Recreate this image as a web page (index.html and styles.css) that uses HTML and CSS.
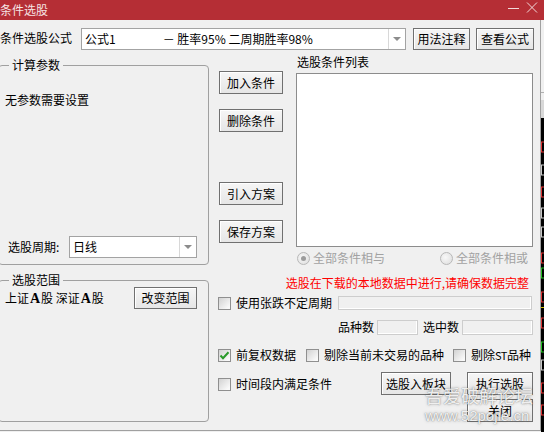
FILE: index.html
```html
<!DOCTYPE html>
<html lang="zh-CN">
<head>
<meta charset="utf-8">
<title>条件选股</title>
<link rel="stylesheet" href="styles.css">
</head>
<body>
<div class="titlebar">
  <span class="title">条件选股</span>
  <svg class="tb-ctrls" width="40" height="20" viewBox="0 0 40 20">
    <line x1="4" y1="8.5" x2="15" y2="8.5" stroke="#f2dada" stroke-width="1"/>
    <line x1="23" y1="2.5" x2="33" y2="12.5" stroke="#f2dada" stroke-width="1"/>
    <line x1="33" y1="2.5" x2="23" y2="12.5" stroke="#f2dada" stroke-width="1"/>
  </svg>
</div>
<div class="frame">
  <div class="dialog">
    <div class="formula-row">
      <span class="lbl-formula">条件选股公式</span>
      <div class="combo combo-formula">
        <span class="combo-text">公式1<span class="desc">－ 胜率95% 二周期胜率98%</span></span>
        <span class="combo-btn"><i class="tri"></i></span>
      </div>
      <button class="btn btn-note">用法注释</button>
      <button class="btn btn-view">查看公式</button>
    </div>
    <div class="main">
      <div class="left">
        <div class="group g-params">
          <span class="legend">计算参数</span>
          <div class="note">无参数需要设置</div>
          <div class="period-row">
            <span class="period-lbl">选股周期:</span>
            <div class="combo combo-period">
              <span class="combo-text">日线</span>
              <span class="combo-btn"><i class="tri"></i></span>
            </div>
          </div>
        </div>
        <div class="group g-range">
          <span class="legend">选股范围</span>
          <div class="range-row">
            <span class="range-text">上证<b class="fa">A</b>股 深证<b class="fa">A</b>股</span>
            <button class="btn btn-range">改变范围</button>
          </div>
        </div>
      </div>
      <div class="right">
        <div class="top">
          <div class="btn-col">
            <button class="btn btn-side">加入条件</button>
            <button class="btn btn-side gap-s">删除条件</button>
            <button class="btn btn-side gap-l">引入方案</button>
            <button class="btn btn-side gap-s">保存方案</button>
          </div>
          <div class="list-area">
            <div class="list-label">选股条件列表</div>
            <div class="listbox"></div>
          </div>
        </div>
        <div class="radio-row">
          <label class="radio-item r-and"><span class="radio on"></span>全部条件相与</label>
          <label class="radio-item"><span class="radio"></span>全部条件相或</label>
        </div>
        <div class="warn">选股在下载的本地数据中进行,请确保数据完整</div>
        <div class="row-period">
          <label class="chk-item"><span class="chk"></span>使用张跌不定周期</label>
          <span class="field field-period"></span>
        </div>
        <div class="row-counts">
          <span>品种数</span><span class="field field-count"></span>
          <span class="lbl-sel">选中数</span><span class="field field-sel"></span>
        </div>
        <div class="row-opts">
          <label class="chk-item"><span class="chk checked"><svg width="11" height="11" viewBox="0 0 11 11"><path d="M1.5 5.5 L4 8.2 L9.5 2.2" fill="none" stroke="#2a9a2a" stroke-width="2"/></svg></span>前复权数据</label>
          <label class="chk-item opt-gap"><span class="chk"></span>剔除当前未交易的品种</label>
          <label class="chk-item opt-gap2"><span class="chk"></span><span>剔除<span class="st">ST</span>品种</span></label>
        </div>
        <div class="row-actions">
          <label class="chk-item chk-time"><span class="chk"></span>时间段内满足条件</label>
          <div class="action-grid">
            <button class="btn btn-block">选股入板块</button>
            <button class="btn btn-run">执行选股</button>
            <button class="btn btn-close">关闭</button>
          </div>
        </div>
      </div>
    </div>
  </div>
  <div class="bgstrip">
    <svg width="3" height="412" viewBox="0 0 3 412">
      <rect x="0" y="0" width="3" height="78" fill="#f0f0f0"/>
      <rect x="0" y="72" width="3" height="1" fill="#b0b0b0"/>
      <rect x="0" y="80" width="3" height="18" fill="#d8d8d8"/>
      <rect x="0" y="98" width="3" height="314" fill="#000"/>
      <rect x="0.5" y="122" width="3" height="10" fill="none" stroke="#e03030"/>
      <rect x="0.5" y="145" width="3" height="10" fill="none" stroke="#c8c8c8"/>
      <rect x="0.5" y="167" width="3" height="10" fill="none" stroke="#e03030"/>
      <rect x="0.5" y="188" width="3" height="10" fill="none" stroke="#c8c8c8"/>
      <rect x="0.5" y="207" width="3" height="10" fill="none" stroke="#c8c8c8"/>
      <rect x="0.5" y="233" width="3" height="10" fill="none" stroke="#e03030"/>
      <rect x="0.5" y="248" width="3" height="10" fill="none" stroke="#20c020"/>
      <rect x="0.5" y="272" width="3" height="10" fill="none" stroke="#e03030"/>
      <rect x="0" y="287" width="3" height="1" fill="#d0c000"/>
      <rect x="0.5" y="298" width="3" height="10" fill="none" stroke="#e03030"/>
      <rect x="0.5" y="322" width="3" height="10" fill="none" stroke="#20c020"/>
      <rect x="0.5" y="340" width="3" height="10" fill="none" stroke="#c8c8c8"/>
      <rect x="0.5" y="363" width="3" height="10" fill="none" stroke="#e03030"/>
      <rect x="0.5" y="385" width="3" height="10" fill="none" stroke="#e03030"/>
    </svg>
  </div>
</div>
<div class="watermark">
  <div class="wm-cn">吾爱破解论坛</div>
  <div class="wm-url">www.52pojie.cn</div>
</div>
</body>
</html>
```

FILE: styles.css
```css
* { box-sizing: border-box; }
html, body { margin: 0; padding: 0; }
body {
  width: 544px;
  height: 432px;
  overflow: hidden;
  background: #f0f0f0;
  font-family: "Noto Sans CJK SC", "Noto Sans", sans-serif;
  font-size: 12px;
  line-height: 16px;
  color: #000;
  position: relative;
}
label { display: flex; align-items: center; }

/* title bar */
.titlebar {
  height: 20px;
  background: #b52e35;
  display: flex;
  align-items: center;
  justify-content: space-between;
}
.title { color: #f6e4e4; line-height: 20px; padding-left: 0; }
.tb-ctrls { display: block; }

/* frame */
.frame { display: flex; height: 412px; }
.dialog {
  width: 541px;
  height: 411px;
  border-right: 1px solid #a0a0a0;
  border-bottom: 1px solid #a0a0a0;
  display: flex;
  flex-direction: column;
}
.bgstrip { width: 3px; }
.bgstrip svg { display: block; }

/* buttons */
.btn {
  font: inherit;
  color: #000;
  margin: 0;
  padding: 0;
  height: 23px;
  line-height: 20px;
  border: 1px solid #707070;
  background: linear-gradient(#f6f6f6, #e6e6e6);
  box-shadow: inset 1px 1px 0 #fff;
  text-align: center;
}

/* combo */
.combo {
  display: flex;
  height: 22px;
  background: #fff;
  border: 1px solid #a3a3a3;
}
.combo-text { flex: 1; padding-left: 3px; line-height: 20px; white-space: nowrap; overflow: hidden; }
.combo-btn {
  width: 17px;
  border-left: 1px solid #d8d8d8;
  display: flex;
  align-items: center;
  justify-content: center;
}
.tri {
  width: 0; height: 0;
  border-left: 4px solid transparent;
  border-right: 4px solid transparent;
  border-top: 4px solid #8c8c8c;
}

/* formula row */
.formula-row {
  height: 35px;
  display: flex;
  align-items: flex-start;
  padding-top: 8px;
}
.lbl-formula { width: 81px; line-height: 20px; }
.combo-formula { width: 325px; }
.desc { margin-left: 47px; }
.btn-note { width: 57px; height: 22px; margin-left: 7px; }
.btn-view { width: 58px; height: 22px; margin-left: 6px; }

/* main */
.main { display: flex; flex: 1; }
.left { width: 209px; display: flex; flex-direction: column; }
.group {
  position: relative;
  margin-left: -2px;
  width: 211px;
  border: 1px solid #a0a0a0;
  border-radius: 4px;
}
.legend {
  position: absolute;
  top: -9px;
  left: 10px;
  padding: 0 3px;
  background: #f0f0f0;
  line-height: 16px;
}
.g-params {
  margin-top: 10px;
  height: 200px;
  display: flex;
  flex-direction: column;
  padding: 26px 0 6px 6px;
}
.period-row { margin-top: auto; display: flex; align-items: center; padding-left: 3px; }
.period-lbl { width: 61px; }
.combo-period { width: 128px; }

.g-range {
  margin-top: 15px;
  height: 142px;
  padding: 6px 0 0 6px;
}
.range-row { display: flex; align-items: center; }
.range-text { width: 129px; white-space: nowrap; }
.fa { font-family: "Liberation Serif", serif; font-weight: bold; font-size: 14px; display: inline-block; width: 12px; text-align: center; }
.btn-range { width: 63px; height: 22px; }

/* right */
.right { flex: 1; display: flex; flex-direction: column; }
.top { display: flex; height: 192px; }
.btn-col { width: 64px; margin-left: 10px; padding-top: 16px; display: flex; flex-direction: column; }
.btn-side { width: 64px; }
.gap-s { margin-top: 15px; }
.gap-l { margin-top: 50px; }
.list-area { margin-left: 13px; }
.list-label { line-height: 14px; padding-left: 1px; }
.listbox {
  margin-top: 4px;
  width: 237px;
  height: 174px;
  background: #fff;
  border: 1px solid #8c8c8c;
}

.radio-row { display: flex; margin-top: 3px; height: 16px; padding-left: 88px; color: #a2a2a2; }
.radio-item { gap: 3px; }
.r-and { width: 143px; }
.radio {
  width: 13px; height: 13px;
  border-radius: 50%;
  border: 1px solid #b8b8b8;
  background: radial-gradient(circle at 40% 40%, #f8f8f8, #dcdcdc);
  display: flex; align-items: center; justify-content: center;
}
.radio.on::after { content: ""; width: 5px; height: 5px; border-radius: 50%; background: #9c9c9c; }

.warn { margin-top: 9px; height: 16px; color: #ff0000; text-align: right; padding-right: 11px; }

.chk-item { gap: 5px; white-space: nowrap; }
.chk {
  width: 13px; height: 13px;
  border: 1px solid #8f8f8f;
  background: linear-gradient(135deg, #d2d2d2, #f9f9f9 85%);
  display: flex; align-items: center; justify-content: center;
}
.chk svg { display: block; }
.st { font-size: 11px; letter-spacing: -0.5px; }

.row-period { margin-top: 4px; display: flex; align-items: center; padding-left: 9px; height: 16px; }
.row-period .chk-item { width: 120px; }
.field { display: block; border: 1px solid #cdcdcd; background: #f0f0f0; box-shadow: inset -1px -1px 0 #fff; }
.field-period { width: 194px; height: 14px; margin-left: 0; }

.row-counts { margin-top: 8px; display: flex; justify-content: flex-end; align-items: center; padding-right: 7px; height: 16px; }
.field-count { width: 41px; height: 15px; margin-left: 3px; }
.lbl-sel { margin-left: 5px; }
.field-sel { width: 71px; height: 15px; margin-left: 3px; }

.row-opts { margin-top: 12px; display: flex; padding-left: 9px; height: 16px; }
.opt-gap { margin-left: 10px; }
.opt-gap2 { margin-left: 9px; }

.row-actions { margin-top: 9px; display: flex; padding-left: 9px; }
.chk-time { margin-top: 4px; height: 16px; align-self: flex-start; }
.action-grid {
  margin-left: auto;
  margin-right: 7px;
  display: grid;
  grid-template-columns: 70px 66px;
  column-gap: 16px;
  row-gap: 4px;
}
.btn-block { width: 70px; }
.btn-run { width: 66px; }
.btn-close { grid-column: 2; width: 66px; }

/* watermark overlay */
.watermark {
  position: absolute;
  left: 425px;
  top: 385px;
  color: rgba(255, 255, 255, 0.9);
  text-shadow: 0 0 1px rgba(60, 60, 60, 0.6), 0 0 3px rgba(90, 90, 90, 0.5);
  pointer-events: none;
}
.wm-cn { font-size: 18px; line-height: 20px; letter-spacing: 0; }
.wm-url { font-family: "Liberation Sans", sans-serif; font-size: 15px; line-height: 16px; margin-top: 3px; }
```
